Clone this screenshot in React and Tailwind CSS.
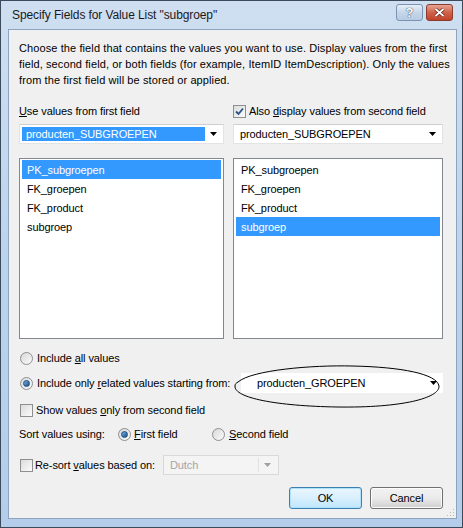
import React from 'react';

const Arrow = ({ color = '#000' }) => (
  <svg width="7" height="4" viewBox="0 0 7 4">
    <path d="M0 0h7L3.5 4z" fill={color} />
  </svg>
);

const Radio = ({ checked }) => (
  <span className="w-[13px] h-[13px] rounded-full border border-[#8d8f91] bg-gradient-to-br from-[#d8d8d8] to-[#fbfbfb] flex items-center justify-center shrink-0">
    {checked && (
      <span className="w-[7px] h-[7px] rounded-full bg-gradient-to-br from-[#6fb3e6] to-[#1b4f8a] border border-[#1e4a78]" />
    )}
  </span>
);

const Check = ({ checked }) => (
  <span className="w-[13px] h-[13px] border border-[#8e8f8f] bg-gradient-to-br from-[#dcdcdc] to-[#fbfbfb] flex items-center justify-center shrink-0">
    {checked && (
      <svg width="9" height="9" viewBox="0 0 9 9">
        <path d="M1 4.5l2.5 2.5L8 1.5" stroke="#2b4f87" strokeWidth="1.8" fill="none" />
      </svg>
    )}
  </span>
);

const Combo = ({ text, selected, className = '' }) => (
  <div className={`h-[20px] bg-white border border-[#e3e3e3] border-t-[#cfcfcf] flex items-center pl-[2px] pr-[6px] ${className}`}>
    <div
      className={`flex-1 h-[14px] flex items-center px-[4px] ${
        selected ? 'bg-[#3399ff] text-white' : 'text-black'
      }`}
    >
      {text}
    </div>
    <span className="ml-[5px]">
      <Arrow />
    </span>
  </div>
);

const List = ({ items, selected }) => (
  <div className="h-[181px] bg-white border border-[#828790] pt-[1px] px-[2px]">
    {items.map((item) => (
      <div
        key={item}
        className={`h-[19px] flex items-center px-[5px] ${
          item === selected ? 'bg-[#3399ff] text-white' : 'text-black'
        }`}
      >
        {item}
      </div>
    ))}
  </div>
);

const fields = ['PK_subgroepen', 'FK_groepen', 'FK_product', 'subgroep'];

export default function App() {
  return (
    <div className="w-[463px] h-[528px] flex flex-col border border-[#3c4b5b] bg-gradient-to-b from-[#cfdff1] via-[#bcd3ec] to-[#b4cdea] font-['Liberation_Sans',sans-serif] text-[11px] tracking-[-0.1px] text-black leading-[16px] select-none">
      <div className="h-[28px] flex items-center pl-[11px] pr-[9px]">
        <span className="text-[12px] tracking-[-0.1px] text-[#1a1a1a]">
          Specify Fields for Value List "subgroep"
        </span>
        <div className="ml-auto flex gap-[3px] mt-[-6px]">
          <div className="w-[27px] h-[17px] rounded-[3px] border border-[#7b93b0] bg-gradient-to-b from-[#e6eef8] via-[#c6d6ea] to-[#b7cbe3] flex items-center justify-center">
            <span className="text-white font-bold text-[13px] leading-none [text-shadow:0_0_1px_#2c3e55,0_0_1px_#2c3e55]">?</span>
          </div>
          <div className="w-[27px] h-[17px] rounded-[3px] border border-[#8b3b2b] bg-gradient-to-b from-[#e8a595] via-[#d0624a] to-[#c2422a] flex items-center justify-center">
            <svg width="11" height="9" viewBox="0 0 11 9">
              <path d="M1.5 1l8 7M9.5 1l-8 7" stroke="#5a1d12" strokeWidth="3.2" />
              <path d="M1.5 1l8 7M9.5 1l-8 7" stroke="#fff" strokeWidth="1.8" />
            </svg>
          </div>
        </div>
      </div>

      <div className="relative ml-[7px] mr-[5px] h-[490px] bg-[#f0f0f0] border border-[#8da4bf] pt-[10px] pl-[10px] pr-[13px]">
        <p className="w-[432px] tracking-[0.1px]">
          Choose the field that contains the values you want to use. Display values from the first
          field, second field, or both fields (for example, ItemID ItemDescription). Only the values
          from the first field will be stored or applied.
        </p>

        <div className="mt-[15px] flex gap-[9px]">
          <div className="w-[205px] flex flex-col">
            <div className="h-[16px] flex items-center">
              <span>
                <u>U</u>se values from first field
              </span>
            </div>
            <Combo text="producten_SUBGROEPEN" selected className="mt-[5px]" />
            <div className="mt-[14px]">
              <List items={fields} selected="PK_subgroepen" />
            </div>
          </div>
          <div className="flex-1 flex flex-col">
            <div className="h-[16px] flex items-center gap-[3px]">
              <Check checked />
              <span>
                Also <u>d</u>isplay values from second field
              </span>
            </div>
            <Combo text="producten_SUBGROEPEN" className="mt-[5px]" />
            <div className="mt-[14px]">
              <List items={fields} selected="subgroep" />
            </div>
          </div>
        </div>

        <div className="mt-[11px] h-[16px] flex items-center gap-[4px] pl-[1px]">
          <Radio />
          <span>
            Include <u>a</u>ll values
          </span>
        </div>

        <div className="relative mt-[7px] h-[20px] flex items-center gap-[4px] pl-[1px]">
          <Radio checked />
          <span>
            Include only <u>r</u>elated values starting from:
          </span>
          <div className="ml-auto w-[202px] h-[20px] bg-white flex items-center pl-[16px] pr-[6px]">
            <span className="flex-1">producten_GROEPEN</span>
            <Arrow />
          </div>
          <svg
            className="absolute left-[213px] top-[-11px] pointer-events-none"
            width="210"
            height="48"
            viewBox="0 0 210 48"
          >
            <path
              d="M6 20C20 8 80 3 120 4C170 5 205 12 207 24C208 36 170 46 105 45C45 44 2 36 3 24C3 22 4 21 6 20z"
              fill="none"
              stroke="#000"
              strokeWidth="1"
            />
          </svg>
        </div>

        <div className="mt-[9px] h-[16px] flex items-center gap-[3px] pl-[1px]">
          <Check />
          <span>
            Show values <u>o</u>nly from second field
          </span>
        </div>

        <div className="mt-[8px] h-[16px] flex items-center">
          <span className="w-[99px]">Sort values using:</span>
          <div className="w-[94px] flex items-center gap-[3px]">
            <Radio checked />
            <span>
              <u>F</u>irst field
            </span>
          </div>
          <div className="flex items-center gap-[4px]">
            <Radio />
            <span>
              <u>S</u>econd field
            </span>
          </div>
        </div>

        <div className="mt-[13px] h-[20px] flex items-center pl-[1px]">
          <Check />
          <span className="ml-[2px] w-[128px]">
            Re-sort <u>v</u>alues based on:
          </span>
          <div className="w-[116px] h-[20px] bg-[#f4f4f4] border border-[#d9d9d9] flex items-center pl-[6px] pr-[7px] text-[#a5a5a5]">
            <span className="flex-1">Dutch</span>
            <span className="h-[14px] border-l border-[#e2e2e2] mr-[5px]" />
            <Arrow color="#a0a0a0" />
          </div>
        </div>

        <div className="mt-[12px] flex justify-end gap-[8px]">
          <button className="w-[73px] h-[22px] rounded-[3px] border border-[#3c7fb1] bg-gradient-to-b from-[#eaf6fd] via-[#d9effc] to-[#bee6fd] shadow-[inset_0_0_0_1px_#aee1fb] text-black">
            OK
          </button>
          <button className="w-[73px] h-[22px] rounded-[3px] border border-[#707070] bg-gradient-to-b from-[#f2f2f2] via-[#ebebeb] to-[#cfcfcf] shadow-[inset_0_0_0_1px_#fcfcfc] text-black">
            Cancel
          </button>
        </div>

        <svg className="absolute right-[1px] bottom-[1px]" width="8" height="8" viewBox="0 0 8 8">
          <g fill="#b9b9b9">
            <rect x="6" y="0" width="1" height="1" />
            <rect x="3" y="3" width="1" height="1" />
            <rect x="6" y="3" width="1" height="1" />
            <rect x="0" y="6" width="1" height="1" />
            <rect x="3" y="6" width="1" height="1" />
            <rect x="6" y="6" width="1" height="1" />
          </g>
        </svg>
      </div>
    </div>
  );
}
